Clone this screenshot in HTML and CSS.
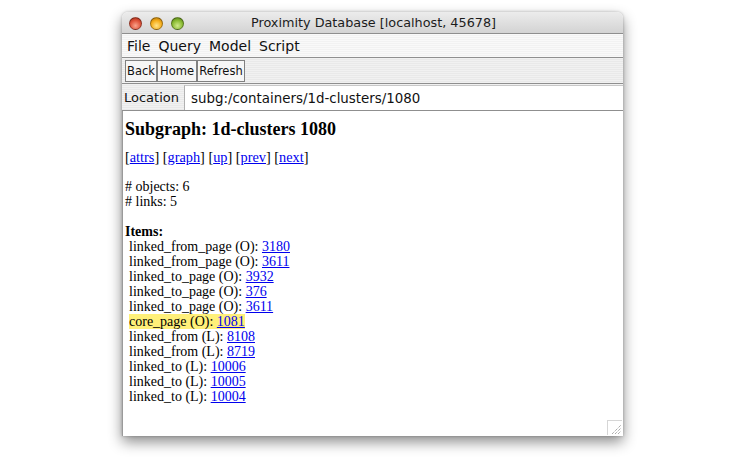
FILE: index.html
```html
<!DOCTYPE html>
<html>
<head>
<meta charset="utf-8">
<link rel="stylesheet" href="styles.css">
</head>
<body>
<div class="window">
  <div class="titlebar">
    <div class="lights">
      <span class="light red"></span>
      <span class="light yellow"></span>
      <span class="light green"></span>
    </div>
    <div class="title">Proximity Database [localhost, 45678]</div>
  </div>
  <div class="menubar">
    <span>File</span><span>Query</span><span>Model</span><span>Script</span>
  </div>
  <div class="toolbar">
    <span class="btn b-back">Back</span><span class="btn b-home">Home</span><span class="btn b-refresh">Refresh</span>
  </div>
  <div class="locbar">
    <span class="loclabel">Location</span>
    <div class="locfield">subg:/containers/1d-clusters/1080</div>
  </div>
  <div class="content">
    <h1>Subgraph: 1d-clusters 1080</h1>
    <p class="nav">[<a href="#">attrs</a>] [<a href="#">graph</a>] [<a href="#">up</a>] [<a href="#">prev</a>] [<a href="#">next</a>]</p>
    <p class="counts"># objects: 6<br># links: 5</p>
    <div class="items">
      <div class="itemshead">Items:</div>
      <div class="item">linked_from_page (O): <a href="#">3180</a></div>
      <div class="item">linked_from_page (O): <a href="#">3611</a></div>
      <div class="item">linked_to_page (O): <a href="#">3932</a></div>
      <div class="item">linked_to_page (O): <a href="#">376</a></div>
      <div class="item">linked_to_page (O): <a href="#">3611</a></div>
      <div class="item"><span class="hl">core_page (O): <a href="#">1081</a></span></div>
      <div class="item">linked_from (L): <a href="#">8108</a></div>
      <div class="item">linked_from (L): <a href="#">8719</a></div>
      <div class="item">linked_to (L): <a href="#">10006</a></div>
      <div class="item">linked_to (L): <a href="#">10005</a></div>
      <div class="item">linked_to (L): <a href="#">10004</a></div>
    </div>
    <div class="grip">
      <svg width="14" height="14" viewBox="0 0 14 14">
        <path d="M4 13 L13 4 M7 13 L13 7 M10 13 L13 10" stroke="#8a8a8a" stroke-width="1" stroke-dasharray="1 1" fill="none"/>
      </svg>
    </div>
  </div>
</div>
</body>
</html>
```

FILE: styles.css
```css
html, body {
  margin: 0;
  padding: 0;
  background: #ffffff;
}
body {
  padding: 12px 0 0 122px;
  height: 458px;
  box-sizing: border-box;
  overflow: hidden;
}
.window {
  width: 501px;
  height: 424px;
  display: flex;
  flex-direction: column;
  border-radius: 6px 6px 0 0;
  box-shadow: 0 6px 14px rgba(0,0,0,0.45), 0 0 3px rgba(0,0,0,0.25);
  background: #fff;
  position: relative;
  overflow: hidden;
}
.titlebar {
  height: 21px;
  flex: none;
  background: linear-gradient(#ececec, #d3d3d3);
  border-bottom: 1px solid #8e8e8e;
  display: flex;
  align-items: center;
  position: relative;
}
.lights {
  display: flex;
  gap: 8px;
  padding-left: 7px;
  padding-top: 1px;
}
.light {
  width: 13px;
  height: 13px;
  border-radius: 50%;
  box-sizing: border-box;
  border: 1px solid rgba(0,0,0,0.35);
}
.red { background: radial-gradient(circle at 50% 70%, #f9a48c 0%, #e0543a 55%, #9a2816 100%); }
.yellow { background: radial-gradient(circle at 50% 70%, #ffe48a 0%, #f5ad1a 55%, #a66a06 100%); }
.green { background: radial-gradient(circle at 50% 70%, #cfe98a 0%, #8abb33 55%, #4e7414 100%); }
.title {
  position: absolute;
  left: 0;
  right: 0;
  top: 3px;
  text-align: center;
  font-family: "DejaVu Sans", sans-serif;
  font-size: 12.8px;
  color: #1c1c1c;
  padding-left: 2px;
}
.menubar {
  height: 23px;
  flex: none;
  background: repeating-linear-gradient(#f9f9f9 0 1px, #f2f2f2 1px 2px);
  border-bottom: 1px solid #8f8f8f;
  display: flex;
  align-items: center;
  gap: 8px;
  padding-left: 5px;
  padding-top: 1px;
  box-sizing: border-box;
  height: 24px;
  font-family: "DejaVu Sans", sans-serif;
  font-size: 14px;
  color: #111;
}
.toolbar {
  flex: none;
  background: repeating-linear-gradient(#f1f1f1 0 1px, #e9e9e9 1px 2px);
  border-bottom: 1px solid #8f8f8f;
  display: flex;
  align-items: center;
  padding-left: 3px;
  padding-top: 1px;
  box-sizing: border-box;
  height: 26px;
}
.btn {
  height: 22px;
  box-sizing: border-box;
  border: 1px solid #808080;
  background: #f6f6f6;
  font-family: "DejaVu Sans", sans-serif;
  font-size: 11.5px;
  color: #111;
  display: flex;
  align-items: center;
  justify-content: center;
}
.b-back { width: 32px; }
.b-home { width: 40px; }
.b-refresh { width: 48px; }
.locbar {
  height: 26px;
  flex: none;
  background: repeating-linear-gradient(#f1f1f1 0 1px, #e9e9e9 1px 2px);
  border-bottom: 1px solid #8f8f8f;
  display: flex;
  align-items: stretch;
}
.loclabel {
  font-family: "DejaVu Sans", sans-serif;
  font-size: 13px;
  color: #111;
  padding-left: 2px;
  width: 60px;
  display: flex;
  align-items: center;
}
.locfield {
  flex: 1;
  background: #fff;
  border-left: 1px solid #b0b0b0;
  border-top: 1px solid #c8c8c8;
  margin-top: 1px;
  font-family: "DejaVu Sans", sans-serif;
  font-size: 13.4px;
  color: #111;
  display: flex;
  align-items: center;
  padding-left: 6px;
}
.content {
  flex: 1;
  background: #fff;
  border-left: 1px solid #9a9a9a;
  padding: 7px 0 0 2px;
  font-family: "Liberation Serif", "Times New Roman", serif;
  font-size: 14px;
  line-height: 15px;
  color: #000;
  position: relative;
}
.content h1 {
  margin: 0 0 10px 0;
  font-size: 18px;
  line-height: 22px;
  font-weight: bold;
}
.content a {
  color: #0000ee;
  text-decoration: underline;
}
.nav {
  margin: 0 0 14px 0;
  font-size: 14.3px;
}
.counts {
  margin: 0 0 15px 0;
}
.itemshead {
  font-weight: bold;
}
.item {
  padding-left: 4px;
}
.hl {
  background: #fff079;
}
.grip {
  position: absolute;
  right: 1px;
  bottom: 1px;
  width: 14px;
  height: 14px;
  border-left: 1px solid #d6d6d6;
  border-top: 1px solid #d6d6d6;
}
.grip svg {
  display: block;
}
```
